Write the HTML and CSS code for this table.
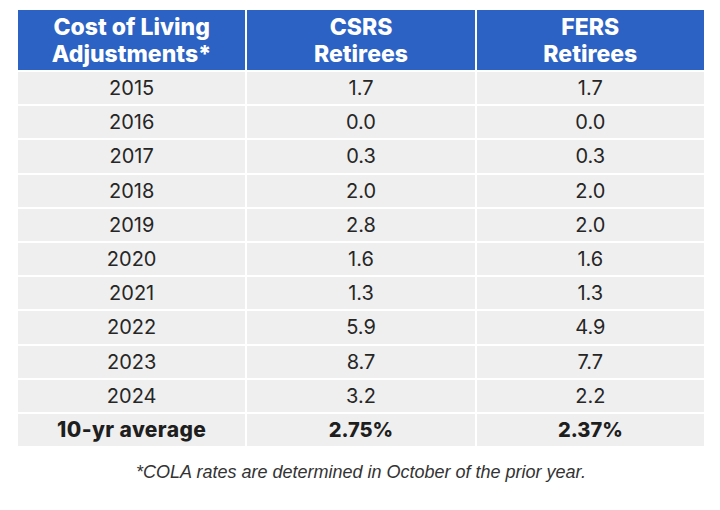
FILE: index.html
```html
<!DOCTYPE html>
<html>
<head>
<meta charset="utf-8">
<link rel="stylesheet" href="styles.css">
</head>
<body>
<div class="wrap">
  <div class="table">
    <div class="cell head">Cost of Living<br>Adjustments*</div>
    <div class="cell head">CSRS<br>Retirees</div>
    <div class="cell head">FERS<br>Retirees</div>

    <div class="cell">2015</div><div class="cell">1.7</div><div class="cell">1.7</div>
    <div class="cell">2016</div><div class="cell">0.0</div><div class="cell">0.0</div>
    <div class="cell">2017</div><div class="cell">0.3</div><div class="cell">0.3</div>
    <div class="cell">2018</div><div class="cell">2.0</div><div class="cell">2.0</div>
    <div class="cell">2019</div><div class="cell">2.8</div><div class="cell">2.0</div>
    <div class="cell">2020</div><div class="cell">1.6</div><div class="cell">1.6</div>
    <div class="cell">2021</div><div class="cell">1.3</div><div class="cell">1.3</div>
    <div class="cell">2022</div><div class="cell">5.9</div><div class="cell">4.9</div>
    <div class="cell">2023</div><div class="cell">8.7</div><div class="cell">7.7</div>
    <div class="cell">2024</div><div class="cell">3.2</div><div class="cell">2.2</div>
    <div class="cell bold wide">10-yr average</div><div class="cell bold">2.75%</div><div class="cell bold">2.37%</div>
  </div>
  <p class="note">*COLA rates are determined in October of the prior year.</p>
</div>
</body>
</html>
```
FILE: styles.css
```css
html, body {
  margin: 0;
  padding: 0;
  background: #ffffff;
}
.wrap {
  padding: 10px 16px 0 18px;
}
.table {
  display: grid;
  grid-template-columns: 1fr 1fr 1fr;
  grid-template-rows: 60px repeat(11, 32.2px);
  column-gap: 2px;
  row-gap: 2px;
  width: 686px;
  font-family: Inter, "Liberation Sans", sans-serif;
}
.cell {
  background: #efefef;
  color: #262626;
  font-size: 20px;
  display: flex;
  align-items: center;
  justify-content: center;
  text-align: center;
}
.head {
  background: #2c62c4;
  color: #ffffff;
  font-weight: 800;
  font-size: 23px;
  line-height: 27px;
  padding-top: 2px;
  box-sizing: border-box;
}
.bold {
  font-weight: 800;
  color: #1e1e1e;
}
.wide {
  font-size: 21px;
  letter-spacing: 0.4px;
}
.note {
  margin: 16px 0 0 0;
  width: 686px;
  text-align: center;
  font-family: "Liberation Sans", Arial, sans-serif;
  font-style: italic;
  font-size: 18px;
  color: #333333;
}
```
